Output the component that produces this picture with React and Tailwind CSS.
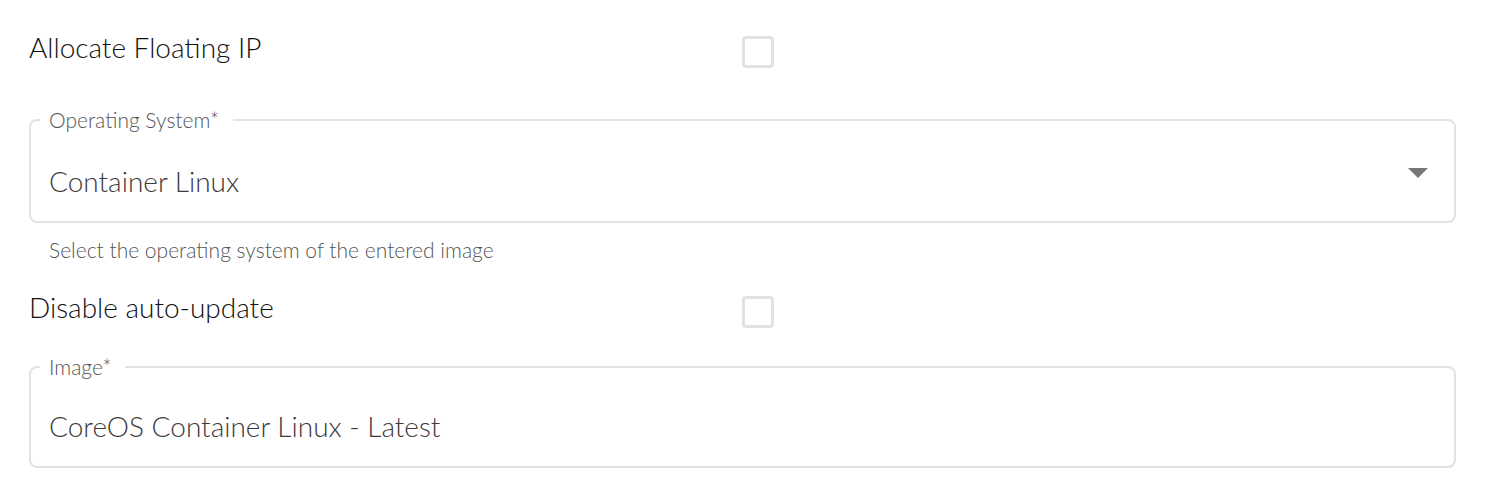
import React from 'react'

const font = { fontFamily: 'Lato, "Noto Sans", sans-serif' }

function CheckRow({ label }) {
  return (
    <div className="grid grid-cols-[713px_1fr] items-center h-[32px]">
      <span className="text-[28px] leading-[32px] font-light text-[#111] -mt-[10px]">{label}</span>
      <span className="block h-[32px] w-[32px] rounded-[4px] border-[3px] border-[#e0e2e4] bg-white" />
    </div>
  )
}

function Field({ label, value, select, h, pt }) {
  return (
    <fieldset className={`relative rounded-[8px] border-2 border-[#e2e2e2] px-[9px] ${h}`}>
      <legend className="pl-[9px] pr-[14px] text-[21px] leading-[22px] font-light text-[#555]">{label}</legend>
      <div className={`pl-[9px] ${pt} text-[28px] leading-[28px] font-light text-[#3e393b]`}>{value}</div>
      {select && (
        <svg className="absolute right-[26px] top-[37px]" width="20" height="10" viewBox="0 0 20 10">
          <path d="M0 0 L20 0 L10 10 Z" fill="#777" />
        </svg>
      )}
    </fieldset>
  )
}

export default function App() {
  return (
    <div className="bg-white min-h-[500px] pl-[29px] pr-[32px] pt-[36px]" style={font}>
      <CheckRow label="Allocate Floating IP" />
      <div className="mt-[41px]">
        <Field label="Operating System*" value="Container Linux" select h="h-[114px]" pt="pt-[36px]" />
      </div>
      <p className="pl-[20px] mt-[15px] text-[21px] leading-[24px] font-light text-[#555]">
        Select the operating system of the entered image
      </p>
      <div className="mt-[34px]">
        <CheckRow label="Disable auto-update" />
      </div>
      <div className="mt-[28px]">
        <Field label="Image*" value="CoreOS Container Linux - Latest" h="h-[112px]" pt="pt-[34px]" />
      </div>
    </div>
  )
}
